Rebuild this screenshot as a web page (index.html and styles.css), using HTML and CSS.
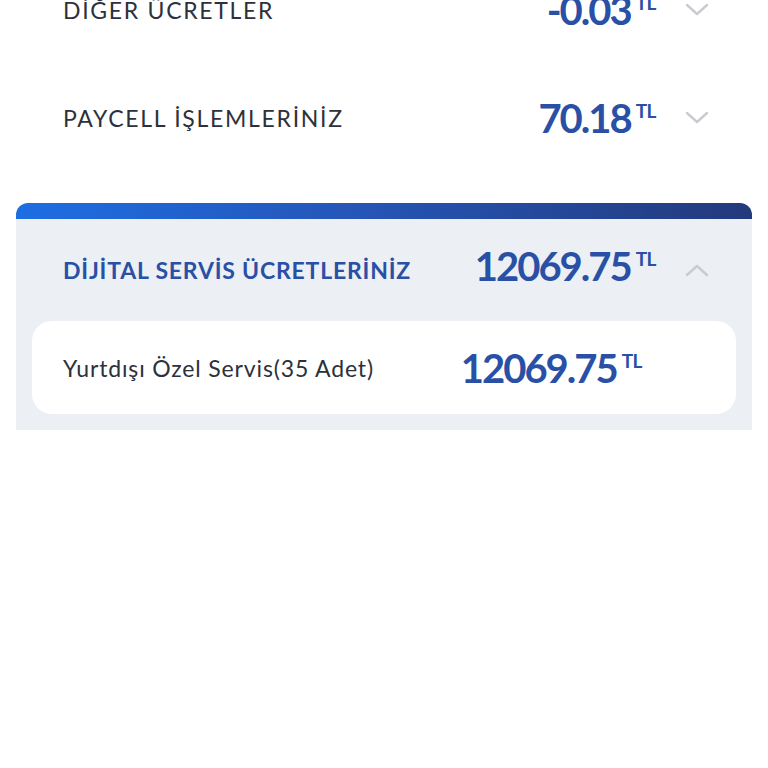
FILE: index.html
```html
<!DOCTYPE html>
<html lang="tr">
<head>
    <meta charset="UTF-8">
    <meta name="viewport" content="width=device-width, initial-scale=1.0">
    <title>Fatura Detayı</title>
    <link rel="stylesheet" href="styles.css">
</head>
<body>

    <!-- Bill sections -->
    <main class="bill-list">

        <div class="bill-row first">
            <span class="row-label">DİĞER ÜCRETLER</span>
            <span class="amount">-0.03<sup>TL</sup></span>
            <svg class="chevron" viewBox="0 0 24 14"><polyline points="2,2 12,11 22,2"/></svg>
        </div>

        <div class="bill-row">
            <span class="row-label">PAYCELL İŞLEMLERİNİZ</span>
            <span class="amount">70.18<sup>TL</sup></span>
            <svg class="chevron" viewBox="0 0 24 14"><polyline points="2,2 12,11 22,2"/></svg>
        </div>

        <!-- Expanded section -->
        <section class="bill-card">
            <div class="card-bar"></div>
            <div class="card-head">
                <span class="head-label">DİJİTAL SERVİS ÜCRETLERİNİZ</span>
                <span class="amount raised">12069.75<sup>TL</sup></span>
                <svg class="chevron" viewBox="0 0 24 14"><polyline points="2,12 12,3 22,12"/></svg>
            </div>
            <div class="card-item">
                <span class="item-label">Yurtdışı Özel Servis(35 Adet)</span>
                <span class="amount">12069.75<sup>TL</sup></span>
            </div>
        </section>

    </main>

</body>
</html>
```

FILE: styles.css
```css
:root {
    --blue: #2a50a6;
    --text-dark: #2c313b;
    --grey-bg: #eceff3;
    --chevron: #c9cbcf;
}

* {
    margin: 0;
    padding: 0;
    box-sizing: border-box;
    font-family: 'Lato', 'Noto Sans', sans-serif;
}

body {
    background: #ffffff;
    overflow: hidden;
}

/* List is scrolled, first row is cut at top */
.bill-list {
    margin-top: -44px;
}

.bill-row {
    display: flex;
    align-items: center;
    height: 108px;
    padding: 0 59px 0 63px;
}

.row-label {
    flex: 1;
    font-size: 23px;
    color: var(--text-dark);
    letter-spacing: 1.7px;
}

.amount {
    display: flex;
    align-items: flex-start;
    font-size: 40px;
    font-weight: 700;
    color: var(--blue);
    letter-spacing: -2px;
    line-height: 1.1;
}

.amount.raised {
    margin-bottom: 8px;
}

.amount sup {
    font-size: 19px;
    font-weight: 700;
    margin-left: 5px;
    margin-top: 5px;
    letter-spacing: -0.5px;
    line-height: 1;
}

.chevron {
    width: 24px;
    height: 14px;
    margin-left: 29px;
    fill: none;
    stroke: var(--chevron);
    stroke-width: 2.4;
    stroke-linecap: round;
    stroke-linejoin: round;
}

/* Expanded card */
.bill-card {
    margin: 31px 16px 0;
    background: var(--grey-bg);
    border-radius: 12px 12px 0 0;
    padding-bottom: 16px;
}

.card-bar {
    height: 16px;
    border-radius: 12px 12px 0 0;
    background: linear-gradient(90deg, #1d6ee3 0%, #2556b8 45%, #233a7c 100%);
}

.card-head {
    display: flex;
    align-items: center;
    height: 102px;
    padding: 0 43px 0 47px;
}

.head-label {
    flex: 1;
    font-size: 23px;
    font-weight: 700;
    color: var(--blue);
    letter-spacing: 0.8px;
}

.card-item {
    display: flex;
    align-items: center;
    height: 93px;
    margin: 0 16px;
    padding: 0 94px 0 31px;
    background: #ffffff;
    border-radius: 20px;
}

.item-label {
    flex: 1;
    font-size: 23px;
    color: var(--text-dark);
    letter-spacing: 0.85px;
}
```
